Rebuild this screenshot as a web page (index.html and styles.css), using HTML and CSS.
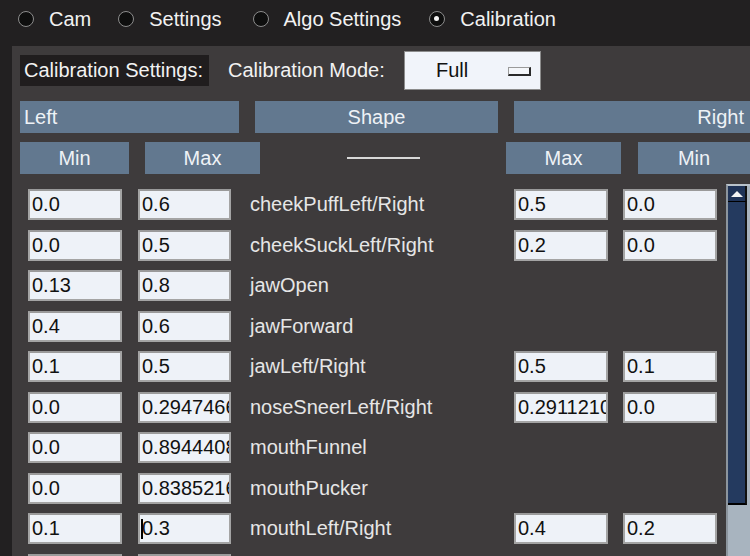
FILE: index.html
```html
<!DOCTYPE html>
<html>
<head>
<meta charset="utf-8">
<link rel="stylesheet" href="styles.css">
</head>
<body>
<div class="topbar">
  <div class="radio"><span class="dot"></span><span class="rlabel">Cam</span></div>
  <div class="radio"><span class="dot"></span><span class="rlabel">Settings</span></div>
  <div class="radio"><span class="dot"></span><span class="rlabel">Algo Settings</span></div>
  <div class="radio"><span class="dot on"></span><span class="rlabel">Calibration</span></div>
</div>
<div class="main">
  <div class="gutter"></div>
  <div class="panel">
    <div class="settings-row">
      <div class="settings-label">Calibration Settings:</div>
      <div class="mode-label">Calibration Mode:</div>
      <div class="dropdown"><span class="dd-text">Full</span><span class="dd-glyph"></span></div>
    </div>
    <div class="head-row">
      <div class="hbar h-left">Left</div>
      <div class="hbar h-shape">Shape</div>
      <div class="hbar h-right">Right</div>
    </div>
    <div class="sub-row">
      <div class="hbar s-min">Min</div>
      <div class="hbar s-max">Max</div>
      <div class="s-line"></div>
      <div class="hbar s-rmax">Max</div>
      <div class="hbar s-rmin">Min</div>
    </div>
    <div class="data">
      <div class="rows">
        <div class="row"><div class="field f1">0.0</div><div class="field f2">0.6</div><div class="name">cheekPuffLeft/Right</div><div class="field f3">0.5</div><div class="field f4">0.0</div></div>
        <div class="row"><div class="field f1">0.0</div><div class="field f2">0.5</div><div class="name">cheekSuckLeft/Right</div><div class="field f3">0.2</div><div class="field f4">0.0</div></div>
        <div class="row"><div class="field f1">0.13</div><div class="field f2">0.8</div><div class="name">jawOpen</div></div>
        <div class="row"><div class="field f1">0.4</div><div class="field f2">0.6</div><div class="name">jawForward</div></div>
        <div class="row"><div class="field f1">0.1</div><div class="field f2">0.5</div><div class="name">jawLeft/Right</div><div class="field f3">0.5</div><div class="field f4">0.1</div></div>
        <div class="row"><div class="field f1">0.0</div><div class="field f2">0.29474665</div><div class="name">noseSneerLeft/Right</div><div class="field f3">0.29112104</div><div class="field f4">0.0</div></div>
        <div class="row"><div class="field f1">0.0</div><div class="field f2">0.89444083</div><div class="name">mouthFunnel</div></div>
        <div class="row"><div class="field f1">0.0</div><div class="field f2">0.83852167</div><div class="name">mouthPucker</div></div>
        <div class="row"><div class="field f1">0.1</div><div class="field f2"><span class="caret"></span>0.3</div><div class="name">mouthLeft/Right</div><div class="field f3">0.4</div><div class="field f4">0.2</div></div>
        <div class="row"><div class="field f1">0.0</div><div class="field f2">0.5</div><div class="name">mouthClose</div></div>
      </div>
      <div class="scrollbar">
        <div class="sb-up"><span class="tri"></span></div>
        <div class="sb-thumb"></div>
      </div>
    </div>
  </div>
</div>
</body>
</html>
```
FILE: styles.css
```css
html, body {
  margin: 0;
  padding: 0;
}
body {
  width: 750px;
  height: 556px;
  overflow: hidden;
  background: #222021;
  font-family: "Liberation Sans", Arial, sans-serif;
  font-size: 20px;
}
.topbar {
  height: 46px;
  display: flex;
  align-items: center;
  padding-left: 18px;
  box-sizing: border-box;
  padding-bottom: 8px;
  color: #f2f2f2;
}
.radio {
  display: flex;
  align-items: center;
  margin-right: 27px;
}
.radio:nth-child(2) { margin-right: 31px; }
.radio:nth-child(3) { margin-right: 28px; }
.dot {
  width: 16px;
  height: 16px;
  border-radius: 50%;
  box-sizing: border-box;
  border: 1.5px solid #8c8c8c;
  background: #0e0e0e;
  margin-right: 15px;
  position: relative;
}
.dot.on::after {
  content: "";
  position: absolute;
  left: 4px;
  top: 4px;
  width: 5px;
  height: 5px;
  border-radius: 50%;
  background: #f4f4f4;
}
.main {
  display: flex;
  height: 510px;
}
.gutter {
  width: 12px;
  flex: none;
}
.panel {
  flex: 1;
  background: #3e3b3c;
  padding: 5px 0 0 8px;
  overflow: hidden;
}
.settings-row {
  display: flex;
  align-items: center;
  height: 39px;
}
.settings-label {
  background: #201d1e;
  color: #f2f2f2;
  height: 31px;
  line-height: 31px;
  width: 189px;
  box-sizing: border-box;
  padding-left: 4px;
  white-space: nowrap;
}
.mode-label {
  color: #f2f2f2;
  margin-left: 19px;
  width: 157px;
  white-space: nowrap;
}
.dropdown {
  margin-left: 19px;
  width: 137px;
  height: 39px;
  box-sizing: border-box;
  background: #f1f4fa;
  border: 1px solid #8c8c8c;
  display: flex;
  align-items: center;
  color: #111;
}
.dd-text {
  margin-left: 31px;
  width: 72px;
}
.dd-glyph {
  width: 23px;
  height: 9px;
  box-sizing: border-box;
  border-top: 1px solid #9a9a9a;
  border-left: 1px solid #9a9a9a;
  border-right: 2px solid #2a2a2a;
  border-bottom: 2px solid #2a2a2a;
  background: #f4f6fa;
  margin-top: 2px;
}
.head-row {
  display: flex;
  margin-top: 11px;
  height: 32px;
}
.hbar {
  background: #62788f;
  color: #eef2f6;
  height: 32px;
  line-height: 32px;
  box-sizing: border-box;
  white-space: nowrap;
  flex: none;
}
.h-left { width: 219px; padding-left: 4px; }
.h-shape { width: 243px; margin-left: 16px; text-align: center; }
.h-right { width: 236px; margin-left: 16px; text-align: right; padding-right: 6px; }
.sub-row {
  display: flex;
  align-items: center;
  margin-top: 9px;
  height: 32px;
}
.s-min { width: 109px; text-align: center; }
.s-max { width: 115px; margin-left: 16px; text-align: center; }
.s-line {
  width: 73px;
  height: 2px;
  background: #d8d8d8;
  margin-left: 87px;
  flex: none;
}
.s-rmax { width: 115px; margin-left: 86px; text-align: center; }
.s-rmin { width: 112px; margin-left: 17px; text-align: center; }
.data {
  display: flex;
  align-items: flex-start;
  margin-top: 10px;
  height: 400px;
}
.rows {
  flex: 1;
  padding-top: 5px;
  padding-left: 8px;
}
.row {
  display: flex;
  align-items: center;
  height: 31px;
  margin-bottom: 9.5px;
}
.field {
  height: 31px;
  box-sizing: border-box;
  background: #eef2f8;
  border: 2px solid #a4a4a4;
  border-top-color: #9a9a9a;
  color: #111;
  padding-left: 2px;
  line-height: 27px;
  overflow: hidden;
  white-space: nowrap;
  flex: none;
  position: relative;
}
.f1 { width: 94px; }
.f2 { width: 93px; margin-left: 16px; }
.name {
  color: #e6e6e6;
  margin-left: 19px;
  width: 264px;
  white-space: nowrap;
  flex: none;
}
.f3 { width: 94px; }
.f4 { width: 94px; margin-left: 15px; }
.caret {
  position: absolute;
  left: 1px;
  top: 4px;
  width: 2px;
  height: 20px;
  background: #000;
}
.scrollbar {
  width: 24px;
  flex: none;
  box-sizing: border-box;
  background: #a8b4bf;
  border-left: 2px solid #8c959e;
  border-top: 2px solid #b9c2ca;
  height: 380px;
  padding-right: 3px;
}
.sb-up {
  height: 15px;
  background: #1f3357;
  border-bottom: 1px solid #000;
  border-right: 2px solid #101010;
  display: flex;
  justify-content: center;
  align-items: center;
}
.tri {
  width: 0;
  height: 0;
  border-left: 6px solid transparent;
  border-right: 6px solid transparent;
  border-bottom: 6px solid #f4f4f4;
}
.sb-thumb {
  height: 303px;
  background: #243a5f;
  border-right: 2px solid #101010;
  border-bottom: 2px solid #000;
  box-sizing: border-box;
}
```
